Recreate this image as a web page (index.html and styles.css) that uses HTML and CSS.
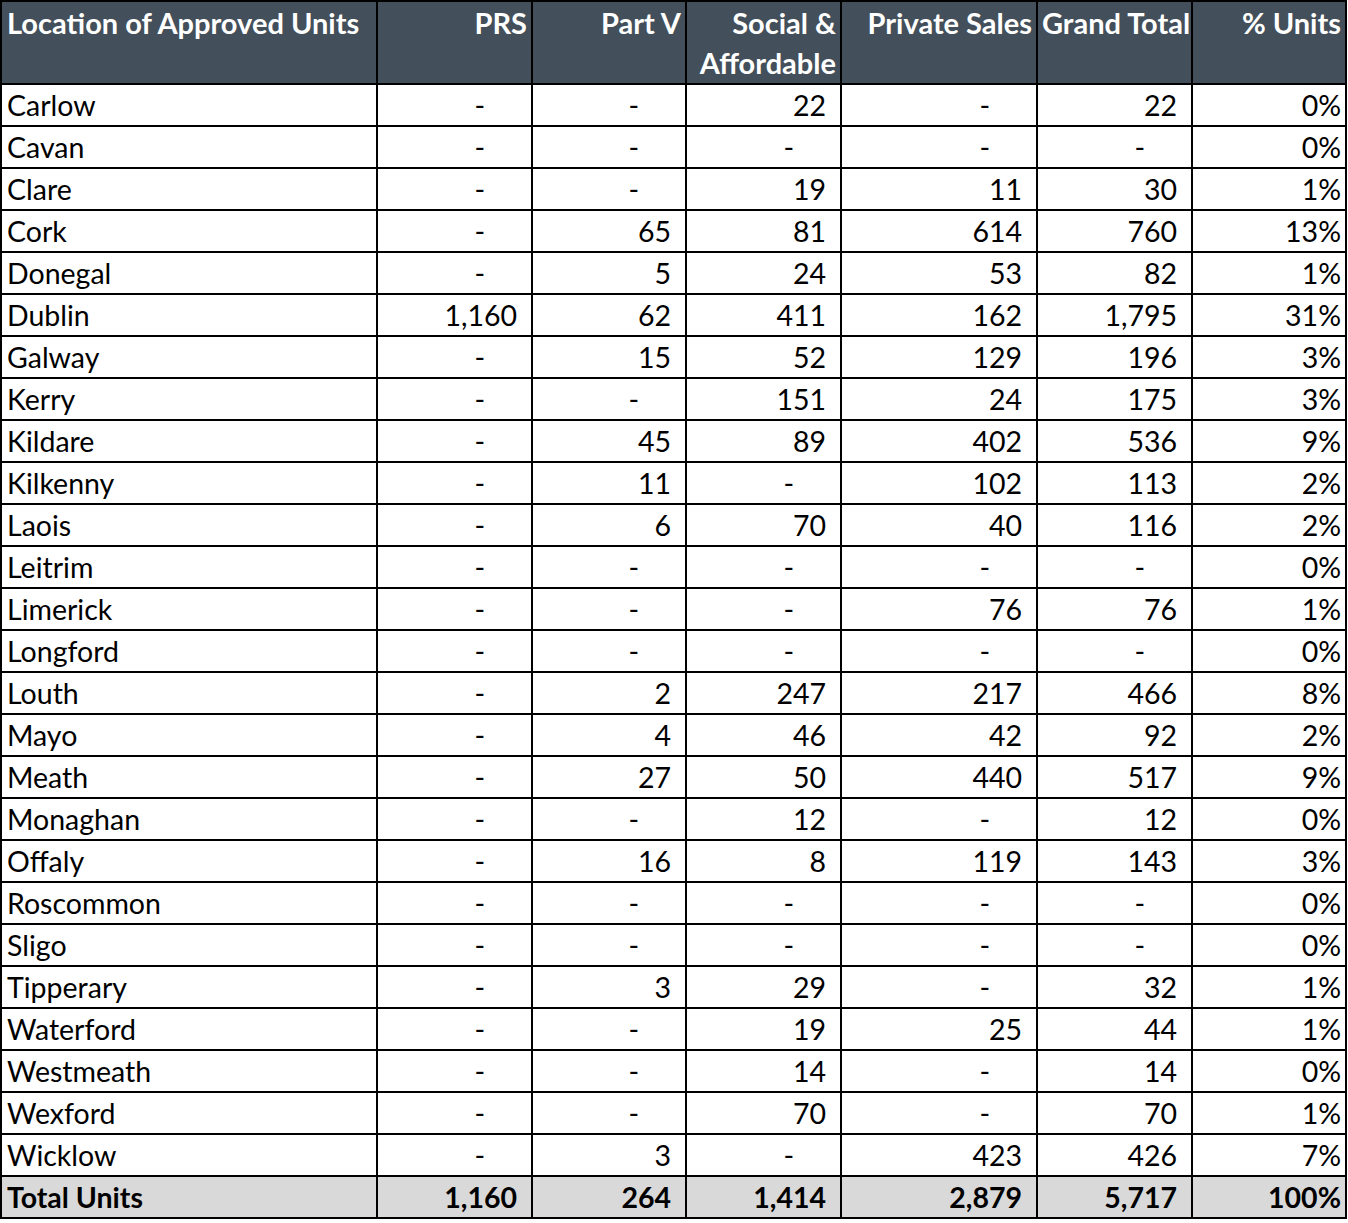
FILE: index.html
```html
<!DOCTYPE html>
<html>
<head>
<meta charset="utf-8">
<link rel="stylesheet" href="styles.css">
</head>
<body>
<table class="units">
  <colgroup>
    <col class="c-loc"><col class="c-num"><col class="c-num2"><col class="c-num"><col class="c-wide"><col class="c-num"><col class="c-num2">
  </colgroup>
  <thead>
    <tr>
      <th class="loc">Location of Approved Units</th>
      <th>PRS</th>
      <th>Part V</th>
      <th>Social &amp;<br>Affordable</th>
      <th>Private Sales</th>
      <th>Grand Total</th>
      <th>% Units</th>
    </tr>
  </thead>
  <tbody>
    <tr><td class="loc">Carlow</td><td class="d">-</td><td class="d">-</td><td>22</td><td class="d">-</td><td>22</td><td class="p">0%</td></tr>
    <tr><td class="loc">Cavan</td><td class="d">-</td><td class="d">-</td><td class="d">-</td><td class="d">-</td><td class="d">-</td><td class="p">0%</td></tr>
    <tr><td class="loc">Clare</td><td class="d">-</td><td class="d">-</td><td>19</td><td>11</td><td>30</td><td class="p">1%</td></tr>
    <tr><td class="loc">Cork</td><td class="d">-</td><td>65</td><td>81</td><td>614</td><td>760</td><td class="p">13%</td></tr>
    <tr><td class="loc">Donegal</td><td class="d">-</td><td>5</td><td>24</td><td>53</td><td>82</td><td class="p">1%</td></tr>
    <tr><td class="loc">Dublin</td><td>1,160</td><td>62</td><td>411</td><td>162</td><td>1,795</td><td class="p">31%</td></tr>
    <tr><td class="loc">Galway</td><td class="d">-</td><td>15</td><td>52</td><td>129</td><td>196</td><td class="p">3%</td></tr>
    <tr><td class="loc">Kerry</td><td class="d">-</td><td class="d">-</td><td>151</td><td>24</td><td>175</td><td class="p">3%</td></tr>
    <tr><td class="loc">Kildare</td><td class="d">-</td><td>45</td><td>89</td><td>402</td><td>536</td><td class="p">9%</td></tr>
    <tr><td class="loc">Kilkenny</td><td class="d">-</td><td>11</td><td class="d">-</td><td>102</td><td>113</td><td class="p">2%</td></tr>
    <tr><td class="loc">Laois</td><td class="d">-</td><td>6</td><td>70</td><td>40</td><td>116</td><td class="p">2%</td></tr>
    <tr><td class="loc">Leitrim</td><td class="d">-</td><td class="d">-</td><td class="d">-</td><td class="d">-</td><td class="d">-</td><td class="p">0%</td></tr>
    <tr><td class="loc">Limerick</td><td class="d">-</td><td class="d">-</td><td class="d">-</td><td>76</td><td>76</td><td class="p">1%</td></tr>
    <tr><td class="loc">Longford</td><td class="d">-</td><td class="d">-</td><td class="d">-</td><td class="d">-</td><td class="d">-</td><td class="p">0%</td></tr>
    <tr><td class="loc">Louth</td><td class="d">-</td><td>2</td><td>247</td><td>217</td><td>466</td><td class="p">8%</td></tr>
    <tr><td class="loc">Mayo</td><td class="d">-</td><td>4</td><td>46</td><td>42</td><td>92</td><td class="p">2%</td></tr>
    <tr><td class="loc">Meath</td><td class="d">-</td><td>27</td><td>50</td><td>440</td><td>517</td><td class="p">9%</td></tr>
    <tr><td class="loc">Monaghan</td><td class="d">-</td><td class="d">-</td><td>12</td><td class="d">-</td><td>12</td><td class="p">0%</td></tr>
    <tr><td class="loc">Offaly</td><td class="d">-</td><td>16</td><td>8</td><td>119</td><td>143</td><td class="p">3%</td></tr>
    <tr><td class="loc">Roscommon</td><td class="d">-</td><td class="d">-</td><td class="d">-</td><td class="d">-</td><td class="d">-</td><td class="p">0%</td></tr>
    <tr><td class="loc">Sligo</td><td class="d">-</td><td class="d">-</td><td class="d">-</td><td class="d">-</td><td class="d">-</td><td class="p">0%</td></tr>
    <tr><td class="loc">Tipperary</td><td class="d">-</td><td>3</td><td>29</td><td class="d">-</td><td>32</td><td class="p">1%</td></tr>
    <tr><td class="loc">Waterford</td><td class="d">-</td><td class="d">-</td><td>19</td><td>25</td><td>44</td><td class="p">1%</td></tr>
    <tr><td class="loc">Westmeath</td><td class="d">-</td><td class="d">-</td><td>14</td><td class="d">-</td><td>14</td><td class="p">0%</td></tr>
    <tr><td class="loc">Wexford</td><td class="d">-</td><td class="d">-</td><td>70</td><td class="d">-</td><td>70</td><td class="p">1%</td></tr>
    <tr><td class="loc">Wicklow</td><td class="d">-</td><td>3</td><td class="d">-</td><td>423</td><td>426</td><td class="p">7%</td></tr>
  </tbody>
  <tfoot>
    <tr><td class="loc">Total Units</td><td>1,160</td><td>264</td><td>1,414</td><td>2,879</td><td>5,717</td><td class="p">100%</td></tr>
  </tfoot>
</table>
</body>
</html>
```
FILE: styles.css
```css
html, body {
  margin: 0;
  padding: 0;
  background: #ffffff;
}

.units {
  border-collapse: collapse;
  table-layout: fixed;
  width: 1347px;
  font-family: Lato, "Open Sans", sans-serif;
  font-size: 28.5px;
  color: #000;
}

.c-loc { width: 376px; }
.c-num { width: 155px; }
.c-num2 { width: 154px; }
.c-wide { width: 196px; }

.units th,
.units td {
  border: 2px solid #000;
  padding: 0 14px 0 4px;
  text-align: right;
  white-space: nowrap;
  overflow: hidden;
}

.units th {
  background: #434f5a;
  color: #ffffff;
  font-weight: 700;
  font-size: 29px;
  height: 80px;
  line-height: 40px;
  vertical-align: top;
  padding: 1px 4px 0 4px;
}

.units td {
  height: 40px;
  line-height: 40px;
  vertical-align: bottom;
}

.units .loc {
  text-align: left;
  padding-left: 5px;
}

.units td.d {
  padding-right: 46px;
}

.units td.p {
  padding-right: 4px;
}

.units tfoot td {
  background: #d9d9d9;
  font-weight: 700;
}
```
